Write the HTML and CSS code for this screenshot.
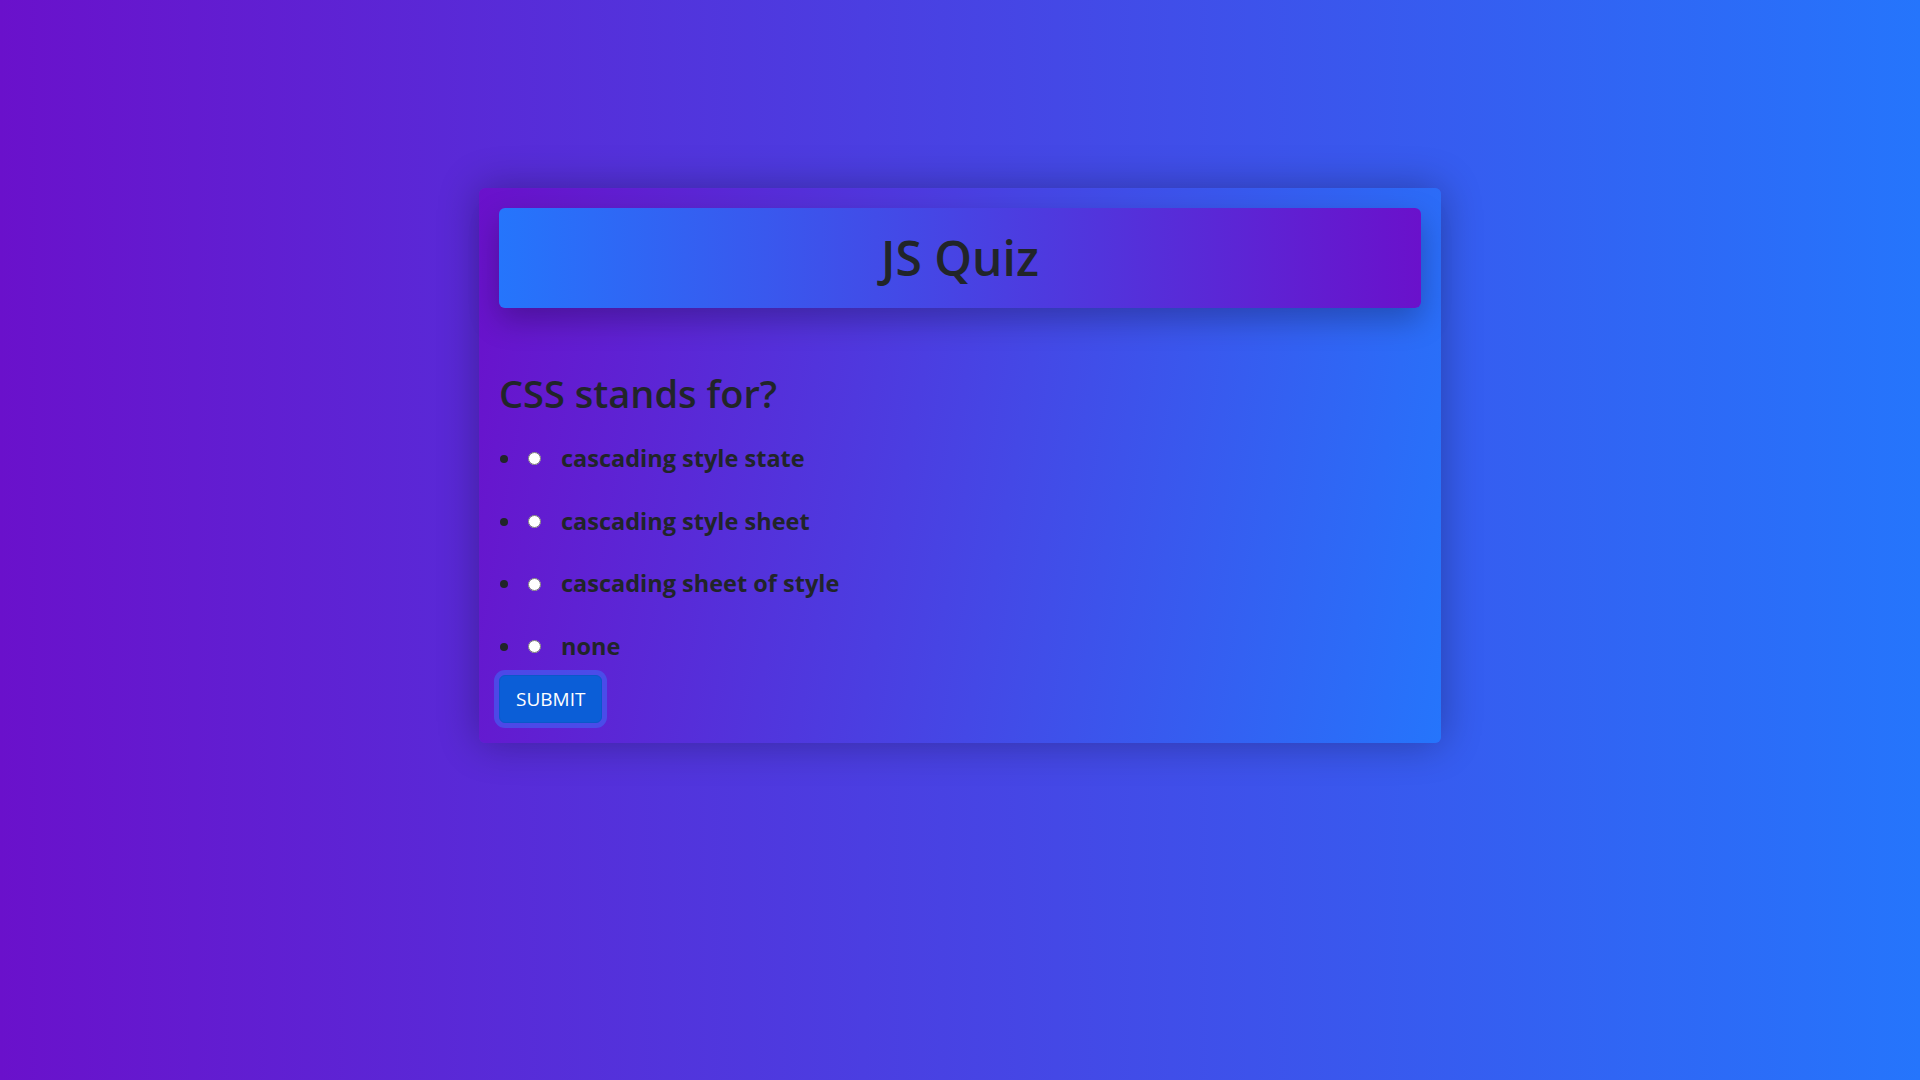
FILE: index.html
```html
<!DOCTYPE html>
<html lang="en">
<head>
<meta charset="utf-8">
<title>JS Quiz</title>
<link rel="stylesheet" href="styles.css">
</head>
<body>
  <div class="quiz">
    <div class="quiz-header">
      <h1 class="title">JS Quiz</h1>
    </div>
    <h2 class="question">CSS stands for?</h2>
    <ul class="answers">
      <li><input type="radio" name="answer" id="a"><label for="a">cascading style state</label></li>
      <li><input type="radio" name="answer" id="b"><label for="b">cascading style sheet</label></li>
      <li><input type="radio" name="answer" id="c"><label for="c">cascading sheet of style</label></li>
      <li><input type="radio" name="answer" id="d"><label for="d">none</label></li>
    </ul>
    <button class="submit" type="button">SUBMIT</button>
  </div>
</body>
</html>
```

FILE: styles.css
```css
* { box-sizing: border-box; }
html, body { height: 100%; }
body {
  margin: 0;
  font-family: "Open Sans", "Noto Sans", sans-serif;
  color: #212529;
  background: linear-gradient(to right, #6a11cb, #2575fc);
  overflow: hidden;
}
.quiz {
  width: 962px;
  margin: 188px auto 0;
  padding: 20px;
  border-radius: 6px;
  background: linear-gradient(100deg, #6a11cb, #2575fc);
  box-shadow: 0 0 40px rgba(0, 0, 0, 0.3);
}
.quiz-header {
  height: 100px;
  border-radius: 6px;
  background: linear-gradient(to right, #2575fc, #6a11cb);
  box-shadow: 0 12px 30px rgba(0, 0, 0, 0.25);
  display: flex;
  align-items: center;
  justify-content: center;
}
.title {
  margin: 0;
  font-size: 48px;
  font-weight: 600;
  line-height: 1.2;
}
.question {
  margin: 61px 0 8px;
  font-size: 38px;
  font-weight: 600;
  line-height: 48px;
}
.answers {
  margin: 23px 0 11px;
  padding-left: 24px;
}
.answers li {
  font-size: 23.5px;
  font-weight: 700;
  line-height: 36px;
  margin-bottom: 26.7px;
}
.answers li:last-child { margin-bottom: 0; }
.answers input {
  width: 13px;
  height: 13px;
  margin: 0 20px 0 5px;
  vertical-align: middle;
  position: relative;
  top: -2px;
}
.submit {
  font-family: inherit;
  font-size: 19px;
  line-height: 30px;
  padding: 8px 16px;
  color: #fff;
  background: #0b5ed7;
  border: 1px solid #0a58ca;
  border-radius: 6px;
  box-shadow: 0 0 0 5px rgba(60, 110, 250, 0.55);
}
```
